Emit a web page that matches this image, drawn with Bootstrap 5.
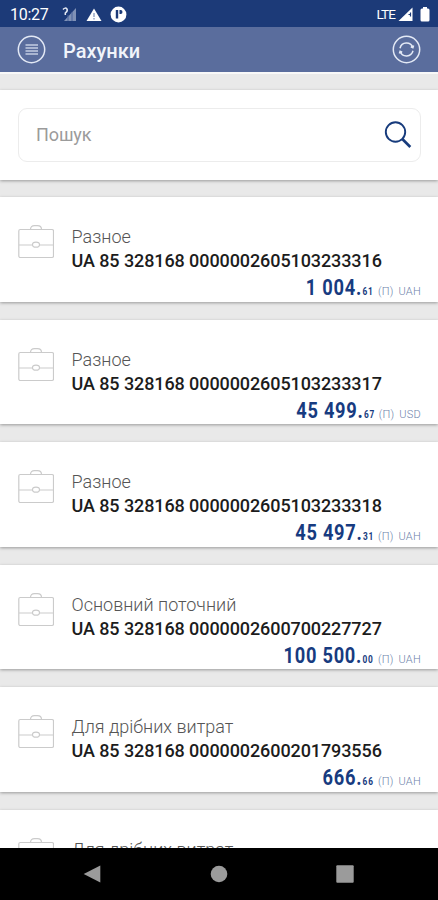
<!DOCTYPE html>
<html lang="uk">
<head>
<meta charset="utf-8">
<meta name="viewport" content="width=device-width, initial-scale=1">
<title>Рахунки</title>
<link href="https://cdn.jsdelivr.net/npm/bootstrap@5.3.0/dist/css/bootstrap.min.css" rel="stylesheet">
<style>
body{font-family:Roboto,"Noto Sans",sans-serif;background:#e9e9e9;height:900px}
svg{display:block;flex:none}
.status{height:27px;background:#1c3a78;font-size:16px;padding:2px 8px 0 10px}
.clock{letter-spacing:-.25px}
.signal{margin-left:13px}
.warn{margin-left:9px}
.app-dot{margin-left:8px}
.lte{font-size:13.5px;letter-spacing:-.9px}
.bars{margin-left:3px}
.battery{margin-left:7px}
.appbar{height:45px;background:#5a6d9d;padding:0 17px}
.title{font-size:20px;font-weight:500;line-height:1;color:#f1f4fa;margin-left:17px;padding-top:2px}
.content{border-top:2px solid #f8f8f8;padding-top:16px;min-height:0}
.panel{background:#fff;box-shadow:0 1px 3px rgba(0,0,0,.34);flex:none}
.search-panel{height:90px;padding:17.5px 17px 0 18px;margin-bottom:17.3px}
.search-box{height:54px;border:1.5px solid #ececec;border-radius:9px;padding:0 8px 0 17px}
.search-box input,.search-box input:focus{font-size:18px;letter-spacing:-.1px;color:#555;background:none;box-shadow:none}
.search-box input::placeholder{color:#9b9b9b;opacity:1}
.account{height:104.3px;margin-bottom:18.2px;padding:28px 17px 0 18px}
.account-text{margin-left:17.5px}
.account-name{font-size:18px;line-height:24px;font-weight:300;color:#555;letter-spacing:0}
.iban{font-size:18px;line-height:24px;font-weight:500;color:#1c1c1c;letter-spacing:-.09px}
.sum{line-height:28px;margin-top:1px;height:28px}
.amount{font-size:22px;font-weight:700;color:#173b80;transform:scaleX(.83);transform-origin:right;display:inline-block;letter-spacing:.9px}
.cents{font-size:10px;letter-spacing:.9px;margin-left:.5px}
.cur{font-size:11px;font-weight:300;color:#6d82aa;margin-left:4px;word-spacing:2px;letter-spacing:.25px}
.navkeys{height:52px;background:#000;padding:0 84px 0 83px;z-index:2}
</style>
<script src="https://cdn.jsdelivr.net/npm/bootstrap@5.3.0/dist/js/bootstrap.bundle.min.js"></script>
</head>
<body class="d-flex flex-column overflow-hidden">
<div class="status d-flex align-items-center text-white flex-shrink-0">
  <span class="clock">10:27</span>
  <svg class="signal" width="15" height="16" viewBox="0 0 15 16"><path d="M14 1v13H2z" fill="#7f91b6"/><path d="M6 8v6M10 5v9" stroke="#4a639a"/><path d="M1 2.500Q3.300 0 5 2q1 2-1.700 4v2" fill="none" stroke="#e5eaf4" stroke-width="1.500"/></svg>
  <svg class="warn" width="16" height="16" viewBox="0 0 16 16"><path d="M8 1.500 15.500 14H.5z" fill="#fff"/><path d="M8 6v4M8 11v1.500" stroke="#8797ba" stroke-width="1.300"/></svg>
  <svg class="app-dot" width="17" height="17" viewBox="0 0 17 17"><circle cx="8.500" cy="8.500" r="7.900" fill="#fff"/><path d="M5.800 4h2.400v8.500H5.800zM9.500 4h1.200q1.800 0 1.800 2t-1.800 2H9.500z" fill="#1c3a78"/></svg>
  <span class="lte ms-auto">LTE</span>
  <svg class="bars" width="15" height="15" viewBox="0 0 15 15"><path d="M14.500.5v13.500H.5z" fill="#fff"/><path d="M12.500 5.500v4M10.500 7.500h2" stroke="#1c3a78" stroke-width="1.200"/></svg>
  <svg class="battery" width="10" height="15" viewBox="0 0 10 15"><path d="M3 0h4v1.500h1Q9.500 1.500 9.500 3v10q0 1.500-1.500 1.500H2Q.5 14.500.5 13V3Q.5 1.500 2 1.500h1z" fill="#fff"/></svg>
</div>
<header class="appbar d-flex align-items-center flex-shrink-0">
  <svg width="29" height="29" viewBox="0 0 29 29" fill="none" stroke="#e3e9f5"><circle cx="14.500" cy="14.500" r="13.200" stroke-width="1.500"/><path d="M8.500 10h12.500M8.500 13h12.500M8.500 16h12.500M8.500 19h12.500" stroke-width="1.700" stroke="#c3cde2"/></svg>
  <h1 class="title mb-0">Рахунки</h1>
  <svg class="ms-auto" width="29" height="29" viewBox="0 0 29 29" fill="none" stroke="#e3e9f5" stroke-width="1.500"><circle cx="14.500" cy="14.500" r="13.200"/><path d="M8 13.200a6.700 6.700 0 0 1 12.800-.7M21 15.800a6.700 6.700 0 0 1-12.800.7M18.800 11.800l2.100.9.700-2.100M10.200 17.200l-2.100-.9-.7 2.100" stroke-width="1.500"/></svg>
</header>
<main class="content d-flex flex-column flex-grow-1 overflow-hidden">
  <section class="panel search-panel">
    <div class="search-box d-flex align-items-center">
      <input class="form-control border-0 p-0" type="text" placeholder="Пошук">
      <svg width="28" height="28" viewBox="0 0 28 28" fill="none" stroke="#173b7c"><circle cx="11.500" cy="11" r="9.700" stroke-width="1.900"/><path d="m18.300 18 8 8" stroke-width="2.700"/></svg>
    </div>
  </section>
  <div id="accounts"></div>
</main>
<nav class="navkeys d-flex align-items-center justify-content-between flex-shrink-0">
  <svg width="18" height="18" viewBox="0 0 18 18"><path d="M17.300.5v17L.7 9z" fill="#9b9b9b"/></svg>
  <svg width="18" height="18" viewBox="0 0 18 18"><circle cx="9" cy="9" r="8.300" fill="#9b9b9b"/></svg>
  <svg width="18" height="18" viewBox="0 0 18 18"><rect x=".3" y=".3" width="17.400" height="17.400" rx="1" fill="#9b9b9b"/></svg>
</nav>
<script>
const accounts=[
 ['Разное','0000002605103233316','1 004','61','UAH'],
 ['Разное','0000002605103233317','45 499','67','USD'],
 ['Разное','0000002605103233318','45 497','31','UAH'],
 ['Основний поточний','0000002600700227727','100 500','00','UAH'],
 ['Для дрібних витрат','0000002600201793556','666','66','UAH'],
 ['Для дрібних витрат','','','','']];
document.getElementById('accounts').innerHTML=accounts.map(([name,num,whole,cents,cur])=>`
<article class="panel account">
  <div class="d-flex">
    <svg width="36" height="36" viewBox="0 0 36 36" fill="none" stroke="#cbcbcb" stroke-width="1.200"><rect x=".8" y="4.500" width="34.700" height="28" rx="1.500"/><path d="M12.500 4.500q0-3.800 4-3.800h3q4 0 4 3.800M1 20h13.500M21.500 20h14"/><ellipse cx="18" cy="19.700" rx="3.500" ry="2.500"/></svg>
    <div class="account-text">
      <div class="account-name">${name}</div>
      ${num?`<div class="iban text-nowrap">UA 85 328168 ${num}</div>`:''}
    </div>
  </div>
  ${num?`<div class="sum text-end text-nowrap"><span class="amount">${whole}.<span class="cents">${cents}</span></span><span class="cur">(П) ${cur}</span></div>`:''}
</article>`).join('');
</script>
</body>
</html>
